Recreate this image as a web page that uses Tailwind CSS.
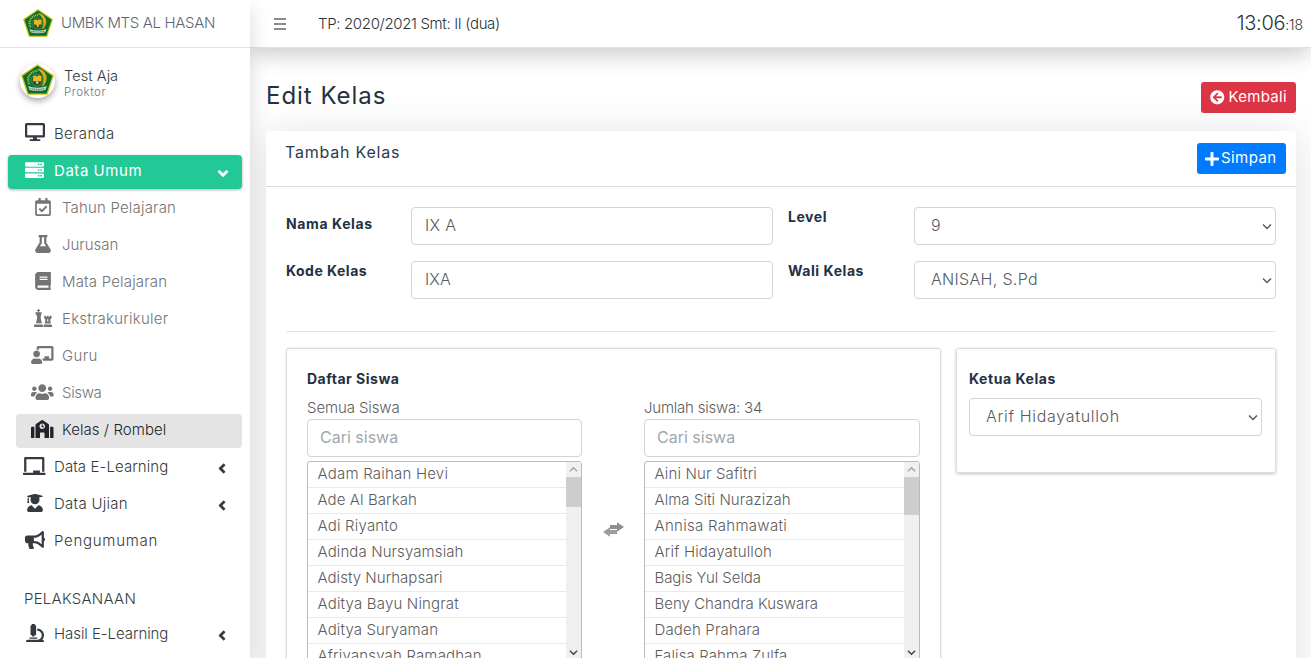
<!DOCTYPE html>
<html lang="id">
<head>
<meta charset="utf-8">
<title>Edit Kelas</title>
<script src="https://cdn.jsdelivr.net/npm/@tailwindcss/browser@4"></script>
</head>
<body class="flex h-[658px] w-[1311px] overflow-hidden bg-white font-['Inter',sans-serif] text-[15px] font-light text-[#2d3237]">
<svg class="hidden">
  <symbol id="logo" viewBox="0 0 60 56">
    <path d="M30 1.5 58.5 21 47.5 54.5h-35L1.5 21Z" fill="#0b6f26" stroke="#d2c41c" stroke-width="2.4" stroke-linejoin="round"/>
    <path d="M30 12c-10 1-17 8-17 16 0 4 1 7 3 10" fill="none" stroke="#a9bd6c" stroke-width="4" stroke-dasharray="2 1.600"/>
    <path d="M31 9c15 2 20 20 8 31 5-10 4-22-8-31Z" fill="#e3a71c" stroke="#e3a71c" stroke-width="1.800"/>
    <circle cx="29" cy="29" r="11" fill="#1d6b2a" stroke="#8fa85a" stroke-width=".8"/>
    <path d="M22 22c4-2 5-1 7 .8 2-1.800 4-2.800 8-.8v9c-4 0-6 0-8 2-2-2-3-2-7-2Z" fill="#f0b429"/>
    <path d="M23 32h13l-2 5h-9Z" fill="#33402a"/>
    <path d="M27.500 32.500h4v3h-4Z" fill="#e9e9df"/>
    <path d="M13 40c5 2.500 11 3 17 3s12-.5 17-3l-2.500 6.500c-4 1.800-9 2-14.500 2s-10.500-.2-14.500-2Z" fill="#c9d0cf"/>
    <path d="M17 44.500c8 2 18 2 26 0" fill="none" stroke="#4d5a58" stroke-width="1.800" stroke-dasharray="2 1.300"/>
  </symbol>
  <symbol id="angle" viewBox="0 0 256 512"><path stroke="currentColor" stroke-width="18" d="M31.700 239l136-136c9.400-9.400 24.600-9.400 33.900 0l22.600 22.600c9.400 9.400 9.400 24.600 0 33.900L127.900 256l96.400 96.400c9.400 9.400 9.400 24.600 0 33.900L201.700 409c-9.400 9.400-24.600 9.400-33.900 0l-136-136c-9.500-9.400-9.500-24.600-.1-34z"/></symbol>
  <symbol id="caret" viewBox="0 0 10 6"><path d="M1 1l4 4 4-4" fill="none" stroke="currentColor" stroke-width="1.500"/></symbol>
</svg>

<aside class="relative z-20 flex w-[250px] shrink-0 flex-col bg-white shadow-[0_8px_20px_rgba(0,0,0,0.15)]">
  <div class="flex h-12 shrink-0 items-center border-b border-[#dee2e6] pl-[23px]">
    <svg class="mb-[2px] h-[28px] w-[30px]"><use href="#logo"/></svg>
    <span class="ml-[8px] tracking-[-0.35px] text-[#5c6670]">UMBK MTS AL HASAN</span>
  </div>
  <div class="flex h-[70px] shrink-0 pl-[20px] pt-[16px]">
    <div class="flex h-[34px] w-[35px] items-center justify-center rounded-full shadow-[0_3px_6px_rgba(0,0,0,0.35)]">
      <svg class="mb-[3px] h-[31px] w-[33px] shrink-0"><use href="#logo"/></svg>
    </div>
    <div class="ml-[9px] pt-[3px]">
      <div class="text-[14.600px] leading-[19px] tracking-[0.04px] text-[#343a40]">Test Aja</div>
      <div class="text-[11.500px] leading-[12px] tracking-[0.54px] text-[#6c757d]">Proktor</div>
    </div>
  </div>

  <nav class="flex flex-col gap-[3px] px-2 text-[#343a40]">
    <a class="flex h-[34px] items-center pb-[4px] pl-[13px]"><span class="flex w-[27px] justify-center"><svg class="mb-[2px] h-[18px] w-[20px] fill-current" viewBox="0 0 576 512"><path d="M528 0H48C21.500 0 0 21.500 0 48v320c0 26.500 21.500 48 48 48h192l-16 48h-72c-13.300 0-24 10.700-24 24s10.700 24 24 24h272c13.300 0 24-10.700 24-24s-10.700-24-24-24h-72l-16-48h192c26.500 0 48-21.500 48-48V48c0-26.500-21.500-48-48-48zm-16 352H64V64h448v288z"/></svg></span><span class="ml-[6px] mt-[2px] tracking-[0.33px]">Beranda</span></a>
    <a class="flex h-[34px] items-center rounded-[4px] bg-[#22c997] pb-[4px] pl-[13px] font-normal text-white shadow-[0_1px_3px_rgba(0,0,0,0.3)]"><span class="flex w-[27px] justify-center"><svg class="mb-[1px] h-[18px] w-[19px] fill-current" viewBox="0 0 512 512" preserveAspectRatio="none"><path fill-rule="evenodd" d="M480 160H32c-17.700 0-32-14.300-32-32V64c0-17.700 14.300-32 32-32h448c17.700 0 32 14.300 32 32v64c0 17.700-14.300 32-32 32zm-48-88a24 24 0 1 0 0 48 24 24 0 1 0 0-48zm-64 0a24 24 0 1 0 0 48 24 24 0 1 0 0-48zm112 248H32c-17.700 0-32-14.300-32-32v-64c0-17.700 14.300-32 32-32h448c17.700 0 32 14.300 32 32v64c0 17.700-14.300 32-32 32zm-48-88a24 24 0 1 0 0 48 24 24 0 1 0 0-48zm-64 0a24 24 0 1 0 0 48 24 24 0 1 0 0-48zm112 248H32c-17.700 0-32-14.300-32-32v-64c0-17.700 14.300-32 32-32h448c17.700 0 32 14.300 32 32v64c0 17.700-14.300 32-32 32zm-48-88a24 24 0 1 0 0 48 24 24 0 1 0 0-48zm-64 0a24 24 0 1 0 0 48 24 24 0 1 0 0-48z"/></svg></span><span class="ml-[6px] mt-[2px] tracking-[0.55px]">Data Umum</span><svg class="mr-[15px] mt-[6px] ml-auto h-[17px] w-[8px] -rotate-90 fill-current"><use href="#angle"/></svg></a>

    <div class="ml-2 flex flex-col gap-[3px] text-[#747474]">
      <a class="flex h-[34px] items-center pb-[4px] pl-[13px]"><span class="flex w-[27px] justify-center"><svg class="mb-[1px] h-[18px] w-[16px] fill-current" viewBox="0 0 448 512"><path d="M400 64h-48V12c0-6.600-5.400-12-12-12h-40c-6.600 0-12 5.400-12 12v52H160V12c0-6.600-5.400-12-12-12h-40c-6.600 0-12 5.400-12 12v52H48C21.500 64 0 85.500 0 112v352c0 26.500 21.500 48 48 48h352c26.500 0 48-21.500 48-48V112c0-26.500-21.500-48-48-48zm-6 400H54a6 6 0 0 1-6-6V160h352v298a6 6 0 0 1-6 6zm-52.800-200.600L198.800 404.500c-4.700 4.700-12.300 4.600-17-.1l-75-75.700c-4.700-4.700-4.600-12.300.1-17l22.700-22.500c4.700-4.700 12.300-4.600 17 .1l44.100 44.400 111-110.200c4.700-4.600 12.300-4.600 17 .1l22.500 22.700c4.700 4.700 4.700 12.300 0 17z"/></svg></span><span class="ml-[6px] mt-[2px] tracking-[0.18px]">Tahun Pelajaran</span></a>
      <a class="flex h-[34px] items-center pb-[4px] pl-[13px]"><span class="flex w-[27px] justify-center"><svg class="mb-[1px] h-[18px] w-[16px] fill-current" viewBox="0 0 448 512"><path d="M437.200 403.500L320 215V64h8c13.300 0 24-10.700 24-24V24c0-13.300-10.700-24-24-24H120c-13.300 0-24 10.700-24 24v16c0 13.300 10.700 24 24 24h8v151L10.800 403.500C-18.500 450.600 15.300 512 70.900 512h306.200c55.700 0 89.400-61.500 60.100-108.500zM137.900 320l48.200-77.600c3.700-5.200 5.800-11.600 5.800-18.400V64h64v160c0 6.900 2.200 13.200 5.800 18.400l48.200 77.600h-172z"/></svg></span><span class="ml-[6px] mt-[2px] tracking-[0px]">Jurusan</span></a>
      <a class="flex h-[34px] items-center pb-[4px] pl-[13px]"><span class="flex w-[27px] justify-center"><svg class="mb-[1px] h-[18px] w-[16px] fill-current" viewBox="0 0 448 512"><path d="M448 360V24c0-13.300-10.700-24-24-24H96C43 0 0 43 0 96v320c0 53 43 96 96 96h328c13.300 0 24-10.700 24-24v-16c0-7.500-3.500-14.300-8.900-18.700-4.200-15.400-4.200-59.300 0-74.700 5.400-4.300 8.900-11.100 8.900-18.600zM128 134c0-3.300 2.700-6 6-6h212c3.300 0 6 2.700 6 6v20c0 3.300-2.700 6-6 6H134c-3.300 0-6-2.700-6-6v-20zm0 64c0-3.300 2.700-6 6-6h212c3.300 0 6 2.700 6 6v20c0 3.300-2.700 6-6 6H134c-3.300 0-6-2.700-6-6v-20zm253.400 250H96c-17.700 0-32-14.300-32-32 0-17.600 14.400-32 32-32h285.400c-1.900 17.100-1.900 46.900 0 64z"/></svg></span><span class="ml-[6px] mt-[2px] tracking-[0.18px]">Mata Pelajaran</span></a>
      <a class="flex h-[34px] items-center pb-[4px] pl-[13px]"><span class="flex w-[27px] justify-center"><svg class="mb-[1px] h-[18px] w-[18px] fill-current" viewBox="0 0 512 512"><path d="M112 0h32v28h28v30h-28v34h60c12 0 20 10 16 22l-22 46h14v32h-22c2 90 10 150 38 216H52c28-66 36-126 38-216H68v-32h-10L36 114c-4-12 4-22 16-22h60V58H84V28h28ZM16 440h224l16 30v42H0v-42ZM304 192h32v26h32v-26h48v26h32v-26h40c8 0 12 6 12 12v60l-36 34c0 40 4 76 14 114H306c10-38 14-74 14-114l-32-34v-60c0-6 6-12 16-12Zm72 112v48h32v-48c0-22-32-22-32 0ZM288 440h208l16 30v42H272v-42Z"/></svg></span><span class="ml-[6px] mt-[2px] tracking-[0.23px]">Ekstrakurikuler</span></a>
      <a class="flex h-[34px] items-center pb-[4px] pl-[13px]"><span class="flex w-[27px] justify-center"><svg class="mb-[1px] h-[18px] w-[22.500px] fill-current" viewBox="0 0 640 512"><path d="M208 352c-2.400 0-4.800.4-7.100 1.100C188 357.300 174.400 360 160 360s-28-2.700-41-6.900c-2.200-.7-4.600-1.100-7-1.100C49.900 352-.3 402.500 0 464.600.1 490.900 21.700 512 48 512h224c26.300 0 47.900-21.100 48-47.400.3-62.100-49.900-112.600-112-112.600zm-48-32c53 0 96-43 96-96s-43-96-96-96-96 43-96 96 43 96 96 96zM592 0H208c-26.500 0-48 22.300-48 49.600V96c23.400 0 45.100 6.800 64 17.800V64h352v288h-64v-64H384v64h-76.200c19.100 16.700 33.100 38.700 39.700 64H592c26.500 0 48-22.300 48-49.600V49.600C640 22.300 618.500 0 592 0z"/></svg></span><span class="ml-[6px] mt-[2px] tracking-[0.35px]">Guru</span></a>
      <a class="flex h-[34px] items-center pb-[4px] pl-[13px]"><span class="flex w-[27px] justify-center"><svg class="mb-[1px] h-[18px] w-[22.500px] fill-current" viewBox="0 0 640 512"><path d="M96 224c35.300 0 64-28.700 64-64s-28.700-64-64-64-64 28.700-64 64 28.700 64 64 64zm448 0c35.300 0 64-28.700 64-64s-28.700-64-64-64-64 28.700-64 64 28.700 64 64 64zm32 32h-64c-17.600 0-33.500 7.100-45.100 18.600 40.300 22.100 68.900 62 75.100 109.400h66c17.700 0 32-14.300 32-32v-32c0-35.300-28.700-64-64-64zm-256 0c61.900 0 112-50.100 112-112S381.900 32 320 32 208 82.100 208 144s50.100 112 112 112zm76.800 32h-8.300c-20.800 10-43.900 16-68.500 16s-47.600-6-68.500-16h-8.300C179.600 288 128 339.600 128 403.200V432c0 26.500 21.500 48 48 48h288c26.500 0 48-21.500 48-48v-28.800c0-63.600-51.600-115.200-115.200-115.200zm-223.700-13.400C161.500 263.100 145.600 256 128 256H64c-35.300 0-64 28.700-64 64v32c0 17.700 14.300 32 32 32h65.900c6.300-47.400 34.900-87.300 75.200-109.400z"/></svg></span><span class="ml-[6px] mt-[2px] tracking-[-0.34px]">Siswa</span></a>
      <a class="flex h-[34px] items-center rounded-[4px] bg-[#e4e4e4] pb-[4px] pl-[13px] text-[#212529]"><span class="flex w-[27px] justify-center"><svg class="mb-[1px] h-[18px] w-[22.500px] fill-current" viewBox="0 0 640 512"><path d="M0 224v272c0 8.800 7.200 16 16 16h80V192H32c-17.700 0-32 14.300-32 32zm360-48h-24v-40c0-4.400-3.600-8-8-8h-16c-4.400 0-8 3.600-8 8v64c0 4.400 3.600 8 8 8h48c4.400 0 8-3.600 8-8v-16c0-4.400-3.600-8-8-8zm137.800-64l-160-106.600a32 32 0 0 0-35.600 0L142.200 112a32 32 0 0 0-14.200 26.700V512h128V368c0-8.800 7.200-16 16-16h96c8.800 0 16 7.200 16 16v144h128V138.700c0-10.700-5.300-20.700-14.200-26.700zM320 256c-44.200 0-80-35.800-80-80s35.800-80 80-80 80 35.800 80 80-35.800 80-80 80zm288-64h-64v320h80c8.800 0 16-7.200 16-16V224c0-17.700-14.300-32-32-32z"/></svg></span><span class="ml-[6px] mt-[2px] tracking-[0.06px]">Kelas / Rombel</span></a>
    </div>

    <a class="flex h-[34px] items-center pb-[4px] pl-[13px]"><span class="flex w-[27px] justify-center"><svg class="mb-[1px] h-[18px] w-[22.500px] fill-current" viewBox="0 0 640 512"><path d="M96 64h448v352h64V40c0-22.100-17.900-40-40-40H72C49.900 0 32 17.900 32 40v376h64V64zm528 384H480v-64H288v64H16c-8.800 0-16 7.200-16 16v32c0 8.800 7.200 16 16 16h608c8.800 0 16-7.200 16-16v-32c0-8.800-7.200-16-16-16z"/></svg></span><span class="ml-[6px] mt-[2px] tracking-[0.09px]">Data E-Learning</span><svg class="mr-[16px] mt-[5px] ml-auto h-[15px] w-[8px] fill-current"><use href="#angle"/></svg></a>
    <a class="flex h-[34px] items-center pb-[4px] pl-[13px]"><span class="flex w-[27px] justify-center"><svg class="mb-[1px] h-[18px] w-[16px] fill-current" viewBox="0 0 448 512"><path d="M319.400 320.600L224 416l-95.400-95.400C57.100 323.700 0 382.200 0 454.400v9.600c0 26.500 21.500 48 48 48h352c26.500 0 48-21.500 48-48v-9.600c0-72.200-57.100-130.700-128.600-133.800zM13.600 79.800l6.400 1.500v58.400c-7 4.200-12 11.500-12 20.300 0 8.400 4.600 15.400 11.100 19.700L3.500 242c-1.700 6.900 2.100 14 7.600 14h41.800c5.500 0 9.300-7.100 7.600-14l-15.600-62.300C51.400 175.400 56 168.400 56 160c0-8.800-5-16.100-12-20.300V87.100l66 15.900c-8.600 17.200-14 36.400-14 57 0 70.700 57.300 128 128 128s128-57.300 128-128c0-20.600-5.300-39.800-14-57l96.300-23.200c18.200-4.400 18.200-27.100 0-31.500l-190.400-46c-13-3.100-26.700-3.100-39.700 0L13.600 48.200c-18.100 4.400-18.100 27.200 0 31.600z"/></svg></span><span class="ml-[6px] mt-[2px] tracking-[0.28px]">Data Ujian</span><svg class="mr-[16px] mt-[5px] ml-auto h-[15px] w-[8px] fill-current"><use href="#angle"/></svg></a>
    <a class="flex h-[34px] items-center pb-[4px] pl-[13px]"><span class="flex w-[27px] justify-center"><svg class="mb-[1px] h-[18px] w-[20px] fill-current" viewBox="0 0 576 512"><path d="M576 240c0-23.600-13-44-32-55.100V32c0-8.700-7-32-32-32-7.100 0-14.200 2.400-20 7l-85 68c-42.700 34.200-96.300 53-151 53H64c-35.300 0-64 28.700-64 64v96c0 35.300 28.700 64 64 64h33.700c-1.400 10.500-2.200 21.100-2.200 32 0 39.800 9.300 77.300 25.600 110.900 5.200 10.700 16.500 17.100 28.400 17.100h74.300c26 0 41.700-29.800 25.900-50.600-16.400-21.500-26.200-48.300-26.200-77.400 0-11.100 1.600-21.800 4.400-32H256c54.700 0 108.300 18.800 151 53l85 68a32 32 0 0 0 20 7c24.900 0 32-22.800 32-32V295.100c19-11.100 32-31.500 32-55.100zm-96 141.400L447 355c-54-43.200-121.900-67-191-67v-96c69.100 0 137-23.800 191-67l33-26.400v282.800z"/></svg></span><span class="ml-[6px] mt-[2px] tracking-[0.72px]">Pengumuman</span></a>
    <div class="flex h-[53px] items-end pb-[5px] pl-[16px]"><span class="mt-[2px] tracking-[0.25px]">PELAKSANAAN</span></div>
    <a class="flex h-[34px] items-center pb-[4px] pl-[13px]"><span class="flex w-[27px] justify-center"><svg class="mb-[1px] h-[18px] w-[18px] fill-current" viewBox="0 0 512 512"><path d="M160 320h12v16c0 8.800 7.200 16 16 16h40c8.800 0 16-7.200 16-16v-16h12c17.700 0 32-14.300 32-32V64c0-17.700-14.300-32-32-32V16c0-8.800-7.200-16-16-16h-64c-8.800 0-16 7.200-16 16v16c-17.700 0-32 14.300-32 32v224c0 17.700 14.300 32 32 32zm304 128h-1.300c30.500-34 49.300-78.800 49.300-128 0-105.900-86.100-192-192-192v64c70.600 0 128 57.400 128 128s-57.400 128-128 128H48c-26.500 0-48 21.500-48 48 0 8.800 7.200 16 16 16h480c8.800 0 16-7.200 16-16 0-26.500-21.500-48-48-48zm-360-32h208c4.400 0 8-3.600 8-8v-16c0-4.400-3.600-8-8-8H104c-4.400 0-8 3.600-8 8v16c0 4.400 3.600 8 8 8z"/></svg></span><span class="ml-[6px] mt-[2px] tracking-[-0.06px]">Hasil E-Learning</span><svg class="mr-[16px] mt-[5px] ml-auto h-[15px] w-[8px] fill-current"><use href="#angle"/></svg></a>
  </nav>
</aside>

<div class="flex min-w-0 flex-1 flex-col">
  <header class="relative z-10 flex h-12 shrink-0 items-center border-b border-[#dee2e6] bg-white pl-[24px] pr-[8px] shadow-[0_8px_22px_-2px_rgba(0,0,0,0.22)]">
    <div class="flex w-[12px] flex-col gap-[3px]"><i class="h-[2px] bg-[#8a8a8a]"></i><i class="h-[2px] bg-[#8a8a8a]"></i><i class="h-[2px] bg-[#8a8a8a]"></i></div>
    <span class="ml-[32px] mt-[2px] tracking-[-0.35px]">TP: 2020/2021 Smt: II (dua)</span>
    <span class="mb-[2px] ml-auto flex items-baseline text-[20px] tracking-[-0.3px]">13:06<span class="text-[14px] tracking-[-0.1px]">:18</span></span>
  </header>

  <main class="flex flex-1 flex-col pl-[16px] pr-[15px] pt-[34px]">
    <div class="flex h-[31px] shrink-0 items-center justify-between">
      <h1 class="mb-[4px] text-[24px] font-normal tracking-[0.97px] text-[#233142]">Edit Kelas</h1>
      <button class="flex h-[31px] w-[95px] items-center rounded-[3px] bg-[#dc3545] pl-[9px] font-normal text-white"><svg class="h-[14.500px] w-[14.500px] fill-current" viewBox="0 0 512 512"><path d="M256 504C119 504 8 393 8 256S119 8 256 8s248 111 248 248-111 248-248 248zm28.900-143.600L209.400 288H392c13.300 0 24-10.700 24-24v-16c0-13.300-10.700-24-24-24H209.400l75.500-72.400c9.700-9.300 9.900-24.800.4-34.300l-11-10.900c-9.400-9.400-24.600-9.400-33.900 0L107.700 239c-9.400 9.400-9.400 24.600 0 33.900l132.700 132.700c9.400 9.400 24.600 9.400 33.900 0l11-10.900c9.500-9.500 9.300-25-.4-34.300z"/></svg><span class="ml-[4px] tracking-[0.27px]">Kembali</span></button>
    </div>

    <section class="mt-[18px] flex h-[600px] shrink-0 flex-col rounded-[4px] bg-white shadow-[0_4px_40px_rgba(0,0,0,0.13)]">
      <div class="flex h-14 shrink-0 justify-between border-b border-[#d9dcdf] pl-[19px] pr-[10px] pt-[12px]">
        <h2 class="text-[16px] font-normal leading-[18px] tracking-[0.78px] text-[#2c3b4b]">Tambah Kelas</h2>
        <button class="flex h-[31px] w-[89px] items-center rounded-[3px] bg-[#007bff] pl-[8px] font-normal text-white"><svg class="h-[16px] w-[14px] fill-current" viewBox="0 0 448 512"><path d="M416 208H272V64c0-17.700-14.300-32-32-32h-32c-17.700 0-32 14.300-32 32v144H32c-17.700 0-32 14.300-32 32v32c0 17.700 14.300 32 32 32h144v144c0 17.700 14.300 32 32 32h32c17.700 0 32-14.300 32-32V304h144c17.700 0 32-14.300 32-32v-32c0-17.700-14.300-32-32-32z"/></svg><span class="ml-[2px] tracking-[0.42px]">Simpan</span></button>
      </div>

      <div class="px-5 pt-5">
        <div class="grid h-[125px] grid-cols-[125px_362px_15px_126px_362px] grid-rows-[38px_38px] gap-y-4 border-b border-[#e3e4e6] text-[#545b62]">
          <label class="pt-[7px] text-[14px] font-bold leading-[19px] tracking-[0.6px] text-[#233142]">Nama Kelas</label>
          <div class="flex items-center rounded-[4px] border border-[#ced4da] pb-[2px] pl-[13px] text-[16px] tracking-[0.3px]">IX A</div>
          <i></i>
          <label class="text-[14px] font-bold leading-[19px] tracking-[0.55px] text-[#233142]">Level</label>
          <div class="flex items-center rounded-[4px] border border-[#ced4da] pl-[16px] pr-[3px] text-[16px]"><span class="mb-[2px]">9</span><svg class="ml-auto h-[7px] w-[10px]"><use href="#caret"/></svg></div>
          <label class="text-[14px] font-bold leading-[19px] tracking-[0.49px] text-[#233142]">Kode Kelas</label>
          <div class="flex items-center rounded-[4px] border border-[#ced4da] pb-[2px] pl-[13px] text-[16px] tracking-[0.1px]">IXA</div>
          <i></i>
          <label class="text-[14px] font-bold leading-[19px] tracking-[0.56px] text-[#233142]">Wali Kelas</label>
          <div class="flex items-center rounded-[4px] border border-[#ced4da] pl-[16px] pr-[3px] text-[16px]"><span class="mb-[2px] tracking-[0.32px]">ANISAH, S.Pd</span><svg class="ml-auto h-[7px] w-[10px]"><use href="#caret"/></svg></div>
        </div>

        <div class="flex items-start gap-[15px] pt-4">
          <div class="h-[420px] w-[655px] rounded-[3px] border border-[#d9dce2] px-[20px] pt-[20px] text-[#5c5c5c] shadow-[0_0_2px_rgba(0,0,0,0.2)]">
            <div class="text-[14px] font-bold leading-[19px] tracking-[0.5px] text-[#233142]">Daftar Siswa</div>
            <div class="flex pt-[10px]">
              <div class="w-[275px]">
                <div class="h-[21px] leading-[19px] tracking-[-0.1px]">Semua Siswa</div>
                <div class="flex h-[38px] items-center rounded-[4px] border border-[#ced4da] pb-[2px] pl-[12px] text-[16px] font-normal tracking-[0px] text-[#a0a7ae]">Cari siswa</div>
                <div class="mt-[4px] flex h-[240px] rounded-t-[3px] border border-[#b9bcbf]">
                  <ul class="flex-1 leading-[23px] *:h-[26px] *:border-b *:border-[#e9e9e9] *:pl-[9.500px]">
                    <li class="tracking-[0.21px]">Adam Raihan Hevi</li><li class="tracking-[0.09px]">Ade Al Barkah</li><li class="tracking-[0.2px]">Adi Riyanto</li><li class="tracking-[0.11px]">Adinda Nursyamsiah</li><li class="tracking-[0.03px]">Adisty Nurhapsari</li><li class="tracking-[0.18px]">Aditya Bayu Ningrat</li><li class="tracking-[0.14px]">Aditya Suryaman</li><li class="tracking-[0.17px]">Afriyansyah Ramadhan</li>
                  </ul>
                  <div class="flex w-[15px] flex-col items-center bg-[#f0f0f0]">
                    <svg class="mt-[4px] h-[7px] w-[9px] rotate-180 text-[#a3a3a3]"><use href="#caret"/></svg>
                    <div class="mt-[4px] h-[30px] w-full bg-[#cdcdcd]"></div>
                    <svg class="mt-[142px] h-[7px] w-[9px] text-[#404040]"><use href="#caret"/></svg>
                  </div>
                </div>
              </div>
              <div class="flex w-[62px] justify-center pt-[124px]">
                <svg class="h-[15px] w-[21px]" viewBox="0 0 21 15"><path d="M7 3h7V.3L21 5l-7 4.700V7H7Z" fill="#8f8f8f"/><path d="M14 8v4H7v2.700L0 10l7-4.700V8Z" fill="#9c9c9c"/></svg>
              </div>
              <div class="w-[276px]">
                <div class="h-[21px] leading-[19px] tracking-[-0.22px]">Jumlah siswa: 34</div>
                <div class="flex h-[38px] items-center rounded-[4px] border border-[#ced4da] pb-[2px] pl-[12px] text-[16px] font-normal tracking-[0px] text-[#a0a7ae]">Cari siswa</div>
                <div class="mt-[4px] flex h-[240px] rounded-t-[3px] border border-[#b9bcbf]">
                  <ul class="flex-1 leading-[23px] *:h-[26px] *:border-b *:border-[#e9e9e9] *:pl-[9.500px]">
                    <li class="tracking-[0.16px]">Aini Nur Safitri</li><li class="tracking-[0.06px]">Alma Siti Nurazizah</li><li class="tracking-[0.3px]">Annisa Rahmawati</li><li class="tracking-[0.17px]">Arif Hidayatulloh</li><li class="tracking-[-0.06px]">Bagis Yul Selda</li><li class="tracking-[0.02px]">Beny Chandra Kuswara</li><li class="tracking-[0.17px]">Dadeh Prahara</li><li class="tracking-[0.11px]">Falisa Rahma Zulfa</li>
                  </ul>
                  <div class="flex w-[15px] flex-col items-center bg-[#f0f0f0]">
                    <svg class="mt-[4px] h-[7px] w-[9px] rotate-180 text-[#a3a3a3]"><use href="#caret"/></svg>
                    <div class="mt-[4px] h-[38px] w-full bg-[#cdcdcd]"></div>
                    <svg class="mt-[134px] h-[7px] w-[9px] text-[#404040]"><use href="#caret"/></svg>
                  </div>
                </div>
              </div>
            </div>
          </div>

          <div class="h-[125px] w-[321px] rounded-[3px] border border-[#d9dce2] pl-[12px] pr-[13px] pt-[20px] shadow-[0_1px_3px_rgba(0,0,0,0.25)]">
            <div class="text-[14px] font-bold leading-[19px] tracking-[0.55px] text-[#233142]">Ketua Kelas</div>
            <div class="mt-[10px] flex h-[38px] items-center rounded-[4px] border border-[#ced4da] pl-[16px] pr-[3px] text-[16px] text-[#545b62]"><span class="mb-[2px] tracking-[0.68px]">Arif Hidayatulloh</span><svg class="ml-auto h-[7px] w-[10px]"><use href="#caret"/></svg></div>
          </div>
        </div>
      </div>
    </section>
  </main>
</div>
</body>
</html>
